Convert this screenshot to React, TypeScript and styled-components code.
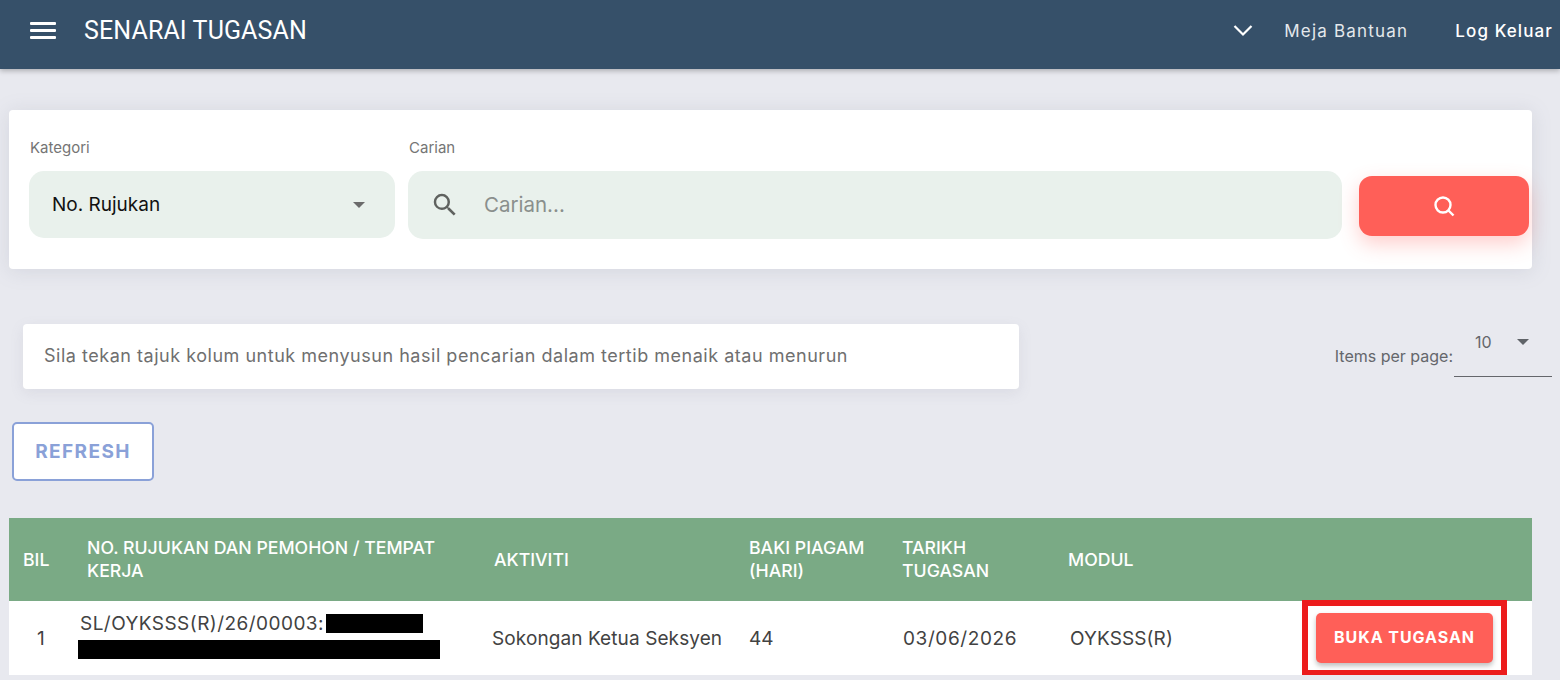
import styled, { createGlobalStyle } from "styled-components";

const GlobalStyle = createGlobalStyle`
  html, body {
    margin: 0;
    padding: 0;
    background: #e8e9ef;
    font-family: Inter, "Noto Sans", sans-serif;
  }
  * {
    box-sizing: border-box;
  }
`;

const columns = "64px 407px 255px 153px 166px 234px 1fr";

const App = () => {
  const headings = [
    { id: 1, label: "BIL" },
    { id: 2, label: "NO. RUJUKAN DAN PEMOHON / TEMPAT KERJA" },
    { id: 3, label: "AKTIVITI" },
    { id: 4, label: "BAKI PIAGAM (HARI)" },
    { id: 5, label: "TARIKH TUGASAN" },
    { id: 6, label: "MODUL" },
  ];
  return (
    <>
      <GlobalStyle />
      <Header>
        <HeaderLeft>
          <Burger>
            <span />
            <span />
            <span />
          </Burger>
          <PageTitle>SENARAI TUGASAN</PageTitle>
        </HeaderLeft>
        <HeaderRight>
          <svg width="20" height="13" viewBox="0 0 20 13" fill="none">
            <path d="M1.5 2 L10 10.5 L18.5 2" stroke="#fff" strokeWidth="2.2" />
          </svg>
          <NavLink>Meja Bantuan</NavLink>
          <NavLink $strong>Log Keluar</NavLink>
        </HeaderRight>
      </Header>
      <Main>
        <SearchCard>
          <Field $width={366}>
            <FieldLabel>Kategori</FieldLabel>
            <SelectBox>
              No. Rujukan
              <Caret $color="#6b6b6b" />
            </SelectBox>
          </Field>
          <Field $grow>
            <FieldLabel>Carian</FieldLabel>
            <SearchBox>
              <svg width="30" height="30" viewBox="0 0 24 24" fill="#5f625f">
                <path d="M15.5 14h-.79l-.28-.27A6.47 6.47 0 0 0 16 9.5 6.5 6.5 0 1 0 9.5 16c1.61 0 3.09-.59 4.23-1.57l.27.28v.79l5 4.99L20.49 19l-4.99-5zm-6 0C7.01 14 5 11.99 5 9.5S7.01 5 9.5 5 14 7.01 14 9.5 11.99 14 9.5 14z" />
              </svg>
              <Placeholder>Carian...</Placeholder>
            </SearchBox>
          </Field>
          <SearchButton>
            <svg width="24" height="24" viewBox="0 0 24 24" fill="none" stroke="#fff" strokeWidth="2.4">
              <circle cx="11" cy="11" r="7.5" />
              <path d="M16.5 16.5 L21.5 21.5" />
            </svg>
          </SearchButton>
        </SearchCard>

        <InfoRow>
          <InfoBox>Sila tekan tajuk kolum untuk menyusun hasil pencarian dalam tertib menaik atau menurun</InfoBox>
          <Paginator>
            <PerPage>Items per page:</PerPage>
            <PerPageSelect>
              10
              <Caret $color="#5f6368" />
            </PerPageSelect>
          </Paginator>
        </InfoRow>

        <RefreshButton>REFRESH</RefreshButton>

        <Table>
          <HeadRow>
            {headings.map((props) => (
              <HeadCell key={props.id}>{props.label}</HeadCell>
            ))}
            <HeadCell />
          </HeadRow>
          <BodyRow>
            <BodyCell $pad={28}>1</BodyCell>
            <RefCell>
              <RefLine>
                SL/OYKSSS(R)/26/00003: <Redact $width={97} />
              </RefLine>
              <Redact $width={362} />
            </RefCell>
            <BodyCell $pad={12}>Sokongan Ketua Seksyen</BodyCell>
            <BodyCell $pad={14}>44</BodyCell>
            <BodyCell $pad={15} $track={0.6}>
              03/06/2026
            </BodyCell>
            <BodyCell $pad={16}>OYKSSS(R)</BodyCell>
            <ActionCell>
              <Highlight>
                <OpenButton>BUKA TUGASAN</OpenButton>
              </Highlight>
            </ActionCell>
          </BodyRow>
        </Table>
      </Main>
    </>
  );
};

export default App;

const Header = styled.header`
  height: 69px;
  background: #365069;
  color: #fff;
  display: flex;
  justify-content: space-between;
  align-items: center;
  padding: 0 7px 8px 30px;
  box-shadow: 0 2px 5px rgba(0, 0, 0, 0.25);
`;
const HeaderLeft = styled.div`
  display: flex;
  align-items: center;
  gap: 28px;
`;
const Burger = styled.div`
  width: 26px;
  display: flex;
  flex-direction: column;
  gap: 4px;
  span {
    height: 3px;
    background: #fff;
    border-radius: 1px;
  }
`;
const PageTitle = styled.div`
  font-family: Roboto, sans-serif;
  font-size: 25px;
  font-weight: 400;
  letter-spacing: 0.12px;
`;
const HeaderRight = styled.div`
  display: flex;
  align-items: center;
  gap: 31px;
`;
const NavLink = styled.div<{ $strong?: boolean }>`
  font-size: 17px;
  letter-spacing: ${(p) => (p.$strong ? "1.1px" : "1.2px")};
  font-weight: ${(p) => (p.$strong ? 500 : 400)};
  color: ${(p) => (p.$strong ? "#fff" : "#e4e8ec")};
  margin-left: ${(p) => (p.$strong ? "16px" : "0")};
`;
const Main = styled.main`
  padding: 41px 28px 0 9px;
`;
const SearchCard = styled.section`
  height: 159px;
  background: #fff;
  border-radius: 4px;
  padding: 29px 3px 0 20px;
  display: flex;
  gap: 13px;
  box-shadow: 0 2px 20px rgba(120, 125, 150, 0.18);
`;
const Field = styled.div<{ $width?: number; $grow?: boolean }>`
  width: ${(p) => (p.$width ? `${p.$width}px` : "auto")};
  flex: ${(p) => (p.$grow ? 1 : "none")};
`;
const FieldLabel = styled.div`
  font-size: 15px;
  line-height: 18px;
  color: #757575;
  margin: 0 0 14px 1px;
`;
const SelectBox = styled.div`
  height: 67px;
  background: #e9f1ec;
  border-radius: 15px;
  display: flex;
  align-items: center;
  justify-content: space-between;
  padding: 0 30px 0 23px;
  font-size: 19px;
  color: #111;
`;
const Caret = styled.i<{ $color: string }>`
  width: 0;
  height: 0;
  border-left: 6px solid transparent;
  border-right: 6px solid transparent;
  border-top: 6px solid ${(p) => p.$color};
`;
const SearchBox = styled.div`
  height: 68px;
  background: #e9f1ec;
  border-radius: 15px;
  display: flex;
  align-items: center;
  gap: 24px;
  padding-left: 22px;
`;
const Placeholder = styled.span`
  font-size: 20.5px;
  margin-top: -1px;
  color: #8a8f8c;
`;
const SearchButton = styled.button`
  width: 170px;
  height: 60px;
  margin-top: 37px;
  margin-left: 4px;
  border: 0;
  border-radius: 13px;
  background: #ff5f58;
  display: flex;
  align-items: center;
  justify-content: center;
  box-shadow: 0 8px 20px rgba(255, 95, 88, 0.3);
`;
const InfoRow = styled.div`
  display: flex;
  justify-content: space-between;
  align-items: flex-start;
  margin-top: 55px;
  margin-right: -20px;
  padding-left: 14px;
`;
const InfoBox = styled.div`
  width: 996px;
  height: 65px;
  background: #fff;
  border-radius: 4px;
  display: flex;
  align-items: center;
  padding: 0 0 2px 21px;
  font-size: 18px;
  letter-spacing: 0.52px;
  color: #6f6f6f;
  box-shadow: 0 4px 14px rgba(120, 125, 150, 0.12);
`;
const Paginator = styled.div`
  display: flex;
  align-items: flex-start;
`;
const PerPage = styled.span`
  margin-top: 22px;
  font-size: 16px;
  line-height: 20px;
  color: #64666b;
`;
const PerPageSelect = styled.div`
  width: 98px;
  height: 53px;
  margin-left: 1px;
  border-bottom: 1px solid #64666b;
  display: flex;
  justify-content: space-between;
  align-items: center;
  padding: 0 23px 16px 21px;
  font-size: 16px;
  color: #64666b;
`;
const RefreshButton = styled.button`
  display: block;
  width: 142px;
  height: 59px;
  margin: 33px 0 0 3px;
  background: #fff;
  border: 2px solid #8aa1d8;
  border-radius: 5px;
  font-family: Inter, sans-serif;
  font-size: 19px;
  font-weight: 700;
  letter-spacing: 1.4px;
  color: #8aa1d8;
`;
const Table = styled.section`
  margin-top: 37px;
`;
const HeadRow = styled.div`
  display: grid;
  grid-template-columns: ${columns};
  height: 83px;
  padding-bottom: 1px;
  background: #7aaa85;
  align-items: center;
`;
const HeadCell = styled.div`
  padding: 0 4px 0 14px;
  font-size: 17.7px;
  line-height: 23px;
  font-weight: 500;
  color: #fff;
`;
const BodyRow = styled.div`
  display: grid;
  grid-template-columns: ${columns};
  height: 74px;
  background: #fff;
  align-items: center;
`;
const BodyCell = styled.div<{ $pad: number; $track?: number }>`
  padding-left: ${(p) => p.$pad}px;
  font-size: 19px;
  letter-spacing: ${(p) => p.$track ?? 0.1}px;
  color: #424242;
`;
const RefCell = styled.div`
  margin: -3px 0 0 5px;
  display: flex;
  flex-direction: column;
  gap: 7px;
`;
const RefLine = styled.div`
  display: flex;
  align-items: center;
  gap: 2px;
  height: 19px;
  padding-left: 2px;
  font-size: 19px;
  letter-spacing: 0.45px;
  white-space: nowrap;
  color: #424242;
`;
const Redact = styled.span<{ $width: number }>`
  display: block;
  flex: none;
  width: ${(p) => p.$width}px;
  height: 19px;
  background: #000;
`;
const ActionCell = styled.div`
  display: flex;
  justify-content: flex-end;
  padding-right: 39px;
`;
const Highlight = styled.div`
  position: relative;
  &::after {
    content: "";
    position: absolute;
    inset: -13px -14px -13px -14px;
    border: 6px solid #ec1c1c;
    pointer-events: none;
  }
`;
const OpenButton = styled.button`
  display: block;
  width: 177px;
  height: 50px;
  padding-bottom: 3px;
  border: 0;
  border-radius: 5px;
  background: #ff5f58;
  font-family: Inter, sans-serif;
  font-size: 16px;
  font-weight: 700;
  letter-spacing: 0.95px;
  color: #fff;
  box-shadow: 0 3px 5px rgba(0, 0, 0, 0.25);
`;
